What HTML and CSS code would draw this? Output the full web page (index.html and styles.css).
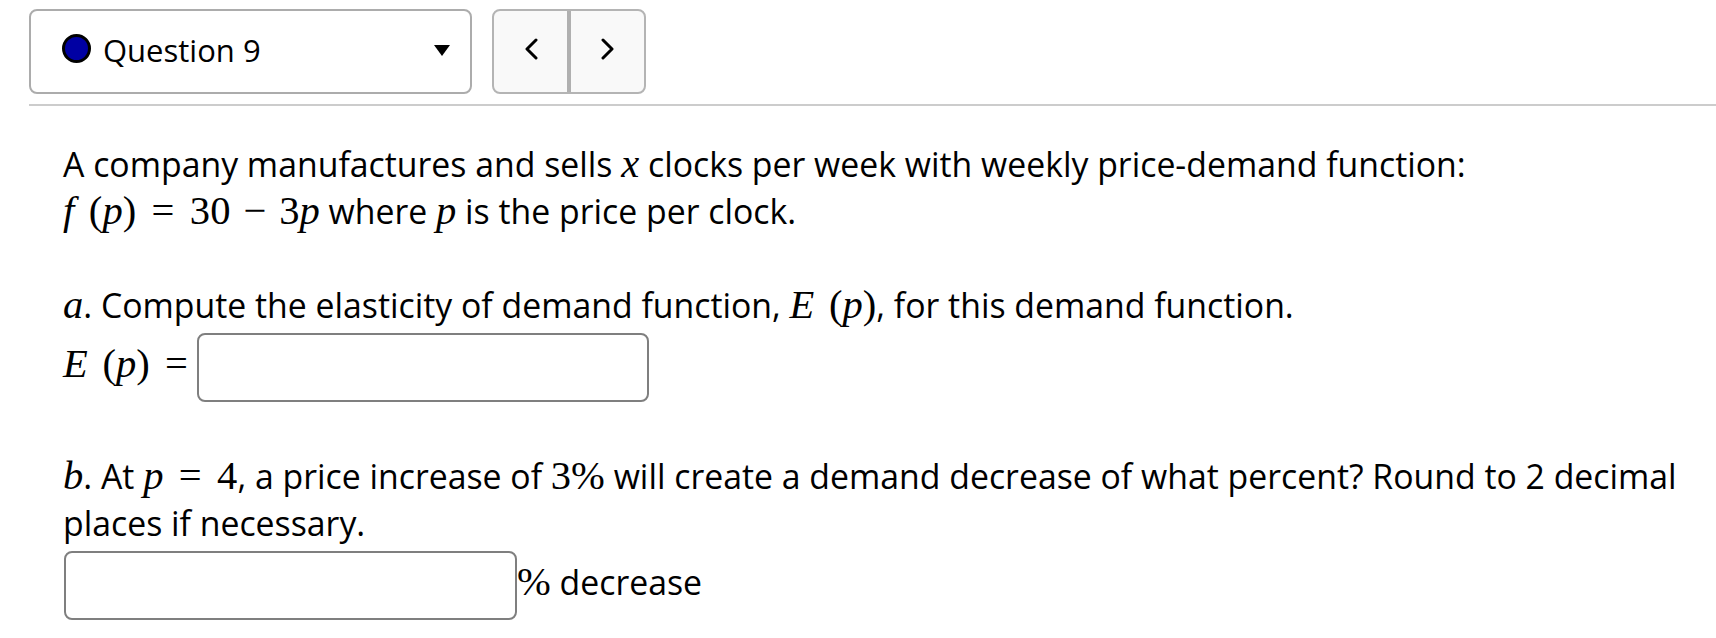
FILE: index.html
```html
<!DOCTYPE html>
<html>
<head>
<meta charset="utf-8">
<link rel="stylesheet" href="styles.css">
</head>
<body>
<div class="page">
  <div class="toolbar">
    <div class="select">
      <span class="dot"></span>
      <span class="qlabel">Question 9</span>
      <span class="caret"></span>
    </div>
    <div class="nav">
      <div class="navbtn">
        <svg width="14" height="22" viewBox="0 0 14 22"><polyline points="12,2 3,11 12,20" fill="none" stroke="#000" stroke-width="3" stroke-linecap="round" stroke-linejoin="round"/></svg>
      </div>
      <div class="navdiv"></div>
      <div class="navbtn">
        <svg width="14" height="22" viewBox="0 0 14 22"><polyline points="2,2 11,11 2,20" fill="none" stroke="#000" stroke-width="3" stroke-linecap="round" stroke-linejoin="round"/></svg>
      </div>
    </div>
  </div>
  <div class="sep"></div>
  <div class="content">
    <p class="para">A company manufactures and sells <span class="m"><i>x</i></span> clocks per week with weekly price-demand function:<br>
      <span class="m"><i>f</i><span class="fs"></span>(<i>p</i>)<span class="op">=</span>30<span class="bin">&minus;</span>3<i>p</i></span> where <span class="m"><i>p</i></span> is the price per clock.</p>
    <p class="para"><span class="m"><i>a</i></span>. Compute the elasticity of demand function, <span class="m"><i>E</i><span class="fs"></span>(<i>p</i>)</span>, for this demand function.<br>
      <span class="m"><i>E</i><span class="fs"></span>(<i>p</i>)<span class="op eq">=</span></span><span class="answer a1"></span></p>
    <p class="para"><span class="m"><i>b</i></span>. At <span class="m"><i>p</i><span class="op">=</span>4</span>, a price increase of <span class="m">3%</span> will create a demand decrease of what percent? Round to 2 decimal places if necessary.<br>
      <span class="answer a2"></span><span class="m">%</span> decrease</p>
  </div>
</div>
</body>
</html>
```

FILE: styles.css
```css
* { box-sizing: border-box; }
html, body { margin: 0; padding: 0; background: #fff; }
body {
  font-family: "Open Sans", "Noto Sans", sans-serif;
  color: #000;
}
.page { padding-top: 9px; }
.toolbar {
  display: flex;
  gap: 20px;
  padding-left: 29px;
}
.select {
  width: 443px;
  height: 85px;
  border: 2px solid #acacac;
  border-radius: 8px;
  display: flex;
  align-items: center;
  padding-left: 31px;
  padding-right: 20px;
}
.dot {
  width: 29px;
  height: 29px;
  border-radius: 50%;
  background: #0000a3;
  border: 3px solid #000;
  flex: none;
  margin-top: -6px;
}
.qlabel {
  font-size: 31px;
  margin-left: 12px;
  flex: 1;
  margin-top: -4px;
}
.caret {
  width: 0;
  height: 0;
  border-left: 8.5px solid transparent;
  border-right: 8.5px solid transparent;
  border-top: 11px solid #000;
  margin-top: -2px;
}
.nav {
  width: 154px;
  height: 85px;
  border: 2px solid #b4b4b4;
  border-radius: 8px;
  background: #f9f9f9;
  display: flex;
}
.navbtn {
  flex: 1;
  display: flex;
  align-items: center;
  justify-content: center;
  padding-bottom: 6px;
}
.navdiv {
  width: 4px;
  background: #b0b0b0;
}
.sep {
  height: 2px;
  background: #cccccc;
  margin-top: 10px;
  margin-left: 29px;
}
.content {
  margin-left: 63px;
  margin-right: 16px;
  margin-top: 35px;
}
.para {
  font-size: 33.8px;
  line-height: 47px;
  margin: 0 0 47px 0;
}
.m {
  font-family: "Liberation Serif", "Times New Roman", serif;
  font-size: 1.2em;
  line-height: 1;
  white-space: nowrap;
}
.m i { font-style: italic; }
.fs { display: inline-block; width: 0.36em; }
.op { padding: 0 0.38em; }
.bin { padding: 0 0.32em; }
.eq { padding-right: 0.22em; }
.answer {
  display: inline-block;
  vertical-align: middle;
  height: 69px;
  border: 2px solid #7f7f7f;
  border-radius: 8px;
  margin: 4px 0;
  background: #fff;
}
.a1 { width: 452px; }
.a2 { width: 453px; margin-left: 1px; }
```
